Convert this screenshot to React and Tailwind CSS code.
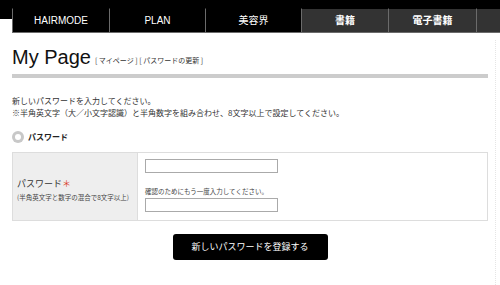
const jp = { fontFamily: '"Noto Sans CJK JP", "Liberation Sans", sans-serif' };

export default function App() {
  const tabs = [
    { label: "HAIRMODE", w: "w-[97px]", dark: false },
    { label: "PLAN", w: "w-[96px]", dark: false },
    { label: "美容界", w: "w-[96px]", dark: false },
    { label: "書籍", w: "w-[87px]", dark: true },
    { label: "電子書籍", w: "w-[88px]", dark: true },
    { label: "電", w: "w-[60px]", dark: true },
  ];

  return (
    <div
      className="relative w-[500px] h-[285px] overflow-hidden bg-white text-[#222]"
      style={{ fontFamily: '"Liberation Sans", "Noto Sans CJK JP", sans-serif' }}
    >
      {/* Global nav */}
      <div className="h-[8px] bg-black" />
      <div className="flex">
        <div className="w-[12px] h-[11px] shrink-0 bg-black" />
        {tabs.map((t) => (
          <div
            key={t.label}
            className={`${t.w} shrink-0 h-[25px] flex items-center justify-center border-l border-b border-t border-t-black border-[#6b6b6b] text-white text-[10px] ${
              t.dark ? "bg-[#333333] font-bold" : "bg-black"
            }`}
          >
            {t.label}
          </div>
        ))}
      </div>

      <div className="px-[12px]">
        {/* Title */}
        <div className="mt-[11px] flex items-end gap-[4px]">
          <h1 className="text-[20px] leading-[26px] font-normal text-[#111]">My Page</h1>
          <span className="mb-[5px] text-[7px] text-[#333]" style={jp}>
            [ マイページ ] [ パスワードの更新 ]
          </span>
        </div>
        <div className="mt-[4px] h-[4px] w-[476px] bg-[#cccccc]" />

        {/* Intro */}
        <div className="mt-[17px] text-[8px] leading-[12px] text-[#333]" style={jp}>
          <p>新しいパスワードを入力してください。</p>
          <p>※半角英文字（大／小文字認識）と半角数字を組み合わせ、8文字以上で設定してください。</p>
        </div>

        {/* Section heading */}
        <div className="mt-[12px] flex items-center gap-[4px]">
          <span className="w-[12px] h-[12px] rounded-full bg-[#c8c8c8] flex items-center justify-center">
            <span className="w-[6px] h-[6px] rounded-full bg-white" />
          </span>
          <span className="text-[8px] font-bold text-[#222]" style={jp}>パスワード</span>
        </div>

        {/* Form table */}
        <div className="mt-[9px] w-[476px] h-[69px] flex border border-[#dddddd]" style={jp}>
          <div className="w-[125px] shrink-0 bg-[#eeeeee] border-r border-[#dddddd] flex flex-col justify-center pl-[4px] pt-[6px]">
            <p className="text-[9px] leading-[12px] text-[#333]">
              パスワード<span className="text-[#d9412b]">＊</span>
            </p>
            <p className="mt-[2px] text-[6.5px] leading-[10px] text-[#444]">
              (半角英文字と数字の混合で8文字以上)
            </p>
          </div>
          <div className="flex-1 pl-[7px] pt-[6px]">
            <div className="w-[133px] h-[14px] border border-[#aaaaaa] bg-white" />
            <p className="mt-[13px] text-[6.5px] leading-[10px] text-[#444]">
              確認のためにもう一度入力してください。
            </p>
            <div className="mt-[2px] w-[133px] h-[14px] border border-[#aaaaaa] bg-white" />
          </div>
        </div>

        {/* Submit */}
        <div className="mt-[13px] flex justify-center">
          <button className="w-[155px] h-[26px] rounded-[3px] bg-black text-white text-[9px]" style={jp}>
            新しいパスワードを登録する
          </button>
        </div>
      </div>

      {/* faint dotted edge on right */}
      <div className="absolute right-[4px] top-[40px] bottom-0 border-r border-dotted border-[#e5e5e5]" />
    </div>
  );
}
